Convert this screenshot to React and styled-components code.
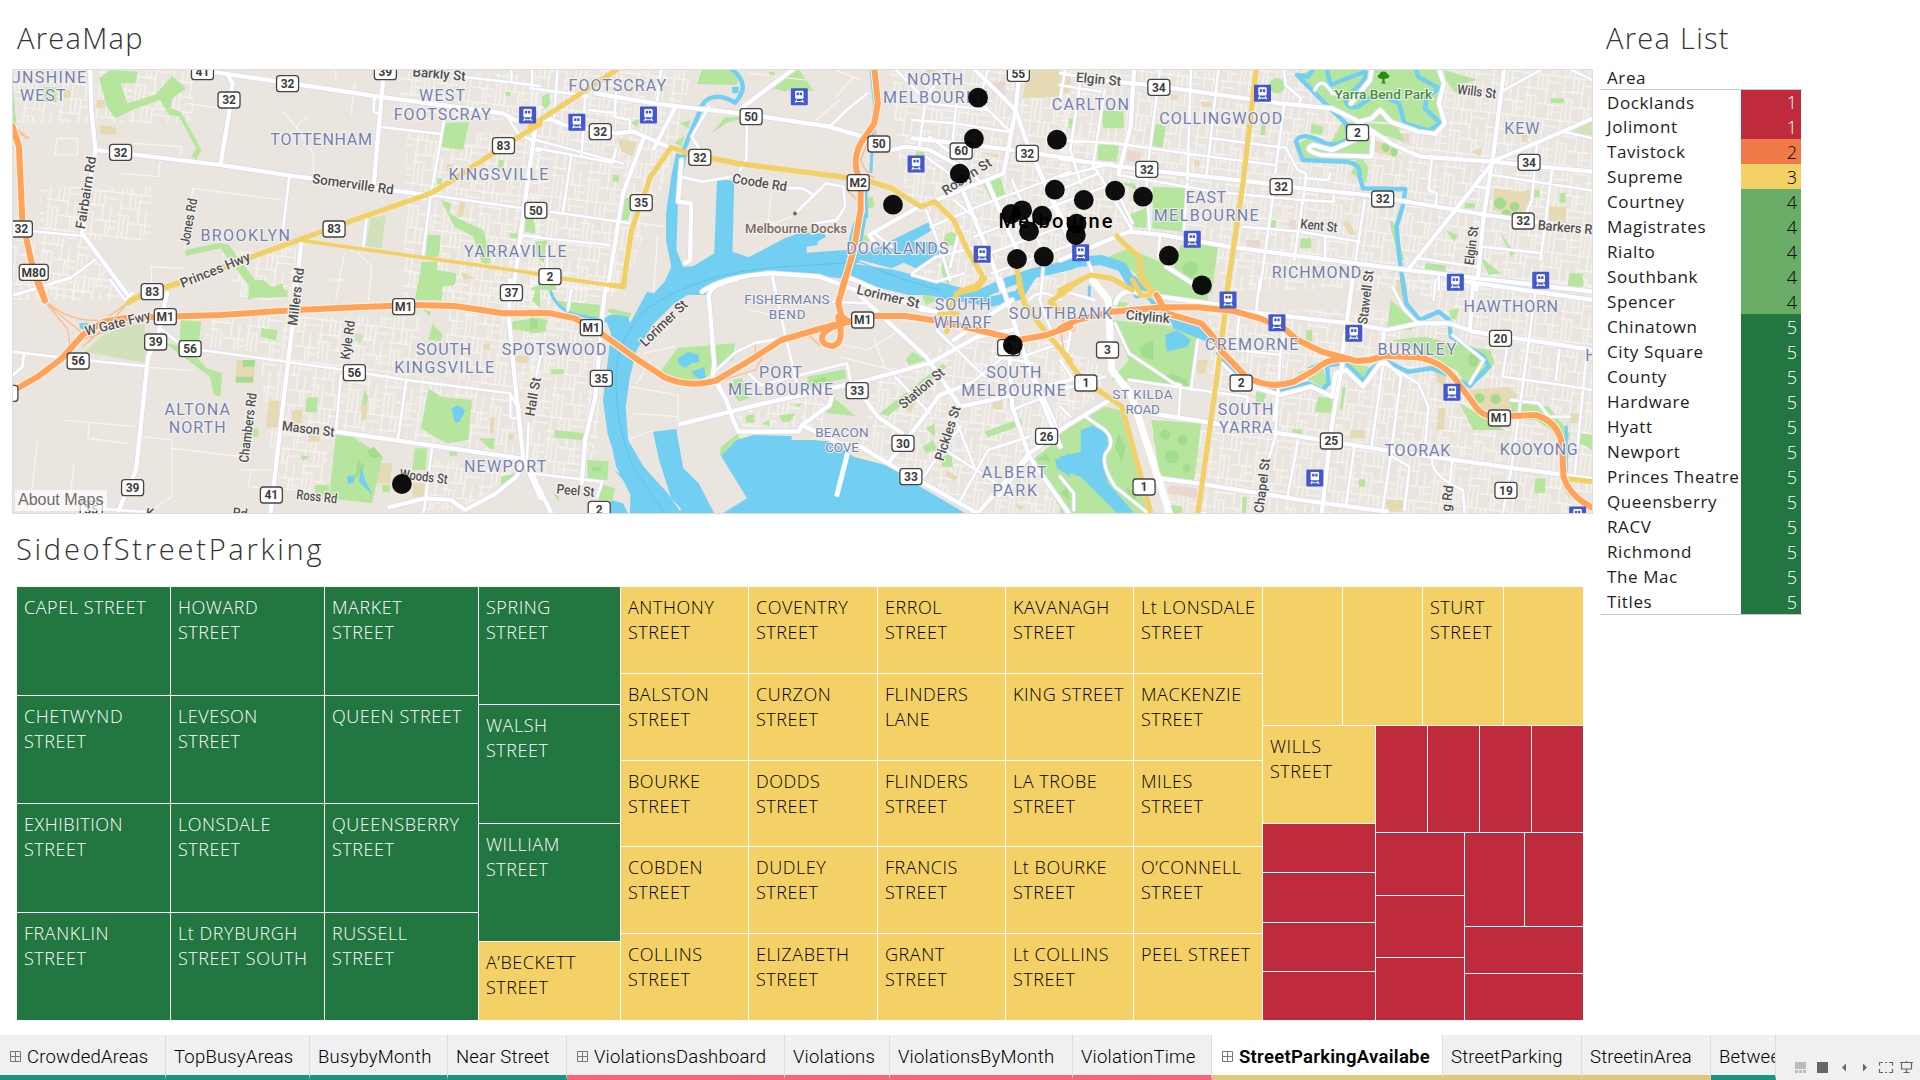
import React from "react";
import styled, { createGlobalStyle } from "styled-components";

const GREEN = "#22763f";
const LIME = "#69ad67";
const GOLD = "#f4d166";
const ORANGE = "#f17a4a";
const RED = "#bf2b3c";

const GlobalStyle = createGlobalStyle`
  * { box-sizing: border-box; }
  body { margin: 0; background: #fff; font-family: "Open Sans", "Noto Sans", sans-serif; }
`;

/* ------------------------------------------------------------------ */
/* Layout                                                              */
/* ------------------------------------------------------------------ */

const Page = styled.div`
  width: 1920px;
  height: 1080px;
  overflow: hidden;
  display: flex;
  flex-direction: column;
`;

const Dashboard = styled.main`
  height: 1035px;
  display: flex;
  padding-left: 12px;
`;

const LeftColumn = styled.section`
  width: 1581px;
  display: flex;
  flex-direction: column;
`;

const RightColumn = styled.section`
  width: 201px;
  margin-left: 8px;
  display: flex;
  flex-direction: column;
`;

const Title = styled.h1`
  margin: 0;
  height: ${(p) => p.$h}px;
  padding: ${(p) => p.$top}px 0 0 ${(p) => p.$left || 5}px;
  font-size: 29px;
  line-height: 40px;
  font-weight: 300;
  letter-spacing: ${(p) => p.$ls || 0}px;
  color: #333;
  white-space: nowrap;
`;

/* ------------------------------------------------------------------ */
/* Map                                                                 */
/* ------------------------------------------------------------------ */

const MapFrame = styled.div`
  position: relative;
  height: 445px;
  overflow: hidden;
  border: 1px solid #dedede;
`;

const MapSvg = styled.svg`
  display: block;
  margin: -1px;
  width: 1581px;
  height: 445px;
`;

const AboutMaps = styled.div`
  position: absolute;
  left: 2px;
  bottom: 2px;
  width: 92px;
  height: 21px;
  padding-left: 3px;
  background: rgba(255, 255, 255, 0.72);
  color: #6c6c6c;
  font: 16px/20px "Liberation Sans", Arial, sans-serif;
  white-space: nowrap;
`;

const SX = 540 / 1568;
const SY = 1 / 3;

/* The base map is stored as six tiles; every tile has its own local grid. */
const TILES = [
  {
    ox: 0, oy: 0,
    blocks: "M38 210H560V370H38Z M1160 220H1568V360H1160Z M1180 400H1568V900H1170Z M640 760L860 740V900H700Z M38 720H260L400 900H38Z M115 560H440V720H115Z",
    parks: "M288 235L320 210L400 215L395 250L350 250L370 310L450 285L500 228L540 265L500 295L495 325L525 335L585 450L570 478L555 470L570 445L520 350L490 345L465 300L395 325L335 355L310 320Z M38 260L48 375H38Z M127 262h37v45h-37z M538 750L640 728L665 735L770 880L720 900L725 860L640 745L540 768Z M780 865L820 850L825 875Z M1290 370L1362 365L1345 450L1283 440Z M1280 600L1310 610L1305 640L1350 665L1405 690L1425 790H1400L1375 710L1320 680Z M1240 705h40l-5 65h-38z M1225 785h45v25l55 10l-5 30h-35l-5 50h-75z M1525 655h25v40h-25z M1480 700h25v15h-25z M1468 275h14v14h-14z M1448 480h14v25h-14z M1268 535h15v18h-15z",
    sand: "M292 375L335 380L340 405L290 402Z M280 300h25v25h-25z M185 270h20v25h-20z M1340 815L1380 838H1345Z M1335 605h18l-8 45h-18z M1298 492h18v24h-18z",
    olive: "M1075 655L1120 645L1108 745L1062 738Z",
    thin: "M165 415H225V465H160Z M355 520L460 530L465 480 M390 430L528 440L520 480 M560 565L820 600 M560 565L545 680 M820 335L860 380L890 350 M860 380L910 460L910 520 M545 310L640 325 M975 210V235 M1030 250L1020 340 M435 800L530 805 M440 800V870 M1000 760L975 900 M1040 760L1080 800L1070 900",
    streets: "M38 688L238 708 M840 530L820 705 M1087 290L1085 335L1102 340 M1100 380L1280 402 M1290 360L1250 590L1228 765 M1250 585L1520 625 M1470 345L1505 400L1550 425 M1345 230L1568 258 M1485 210V245 M1545 210V258 M275 780L210 830L45 885 M1065 650L1055 740 M1510 705L1568 710 M1555 450L1568 452",
    roads: "M262 210L265 330L277 450L262 540L238 700L375 890 M277 450L640 495L850 528L905 535L1145 572L1260 588 M540 205L660 222L1100 290L1460 340L1500 362 M660 222L675 250L665 340L640 495 M1115 210L1100 380L1085 560 M1555 380L1530 560L1500 800L1485 900 M875 730L855 905",
    yellow: "M1568 372L1460 440L1300 550L1250 580L1000 670L880 715L720 775L540 840L380 900",
    yellowThin: "M880 722L1568 822",
    orange: "M36 378L55 440L65 660L90 780L130 900",
    ramps: "M45 395L85 415 M50 390Q70 400 75 415",
    areas: [["UNSHINE", 30, 248, 220], ["WEST", 58, 303, 132], ["TOTTENHAM", 785, 436, 295], ["WEST", 1217, 304, 133], ["FOOTSCRAY", 1143, 359, 282], ["BROOKLYN", 582, 723, 260], ["KINGSVILLE", 1302, 541, 290], ["YARRAVILLE", 1347, 772, 298]],
    names: [["Barkly St", 1275, 222, 53, 5], ["Somerville Rd", 1025, 553, 82, 8], ["Fairbairn Rd", 250, 578, 73, -81], ["Jones Rd", 548, 665, 47, -80], ["Princes Hwy", 625, 810, 74, -22]],
    shields: [["32", 835, 251], ["41", 588, 215], ["39", 1119, 215], ["32", 665, 300], ["32", 350, 457], ["83", 1462, 437], ["83", 970, 687], ["32", 62, 687], ["M80", 98, 817], ["83", 442, 875], ["37", 1485, 878]],
    trains: [[1532, 345]],
    dots: [],
  },
  {
    ox: 530, oy: 60,
    blocks: "M0 27H470L420 280L270 690H0Z M1050 27H1568V690H1300L1100 440L1060 240Z M1110 640L1300 570V690Z",
    parks: "M500 27H580L605 60L600 75L485 72Z M705 85L780 27L825 95L765 85L740 95Z M528 220L565 172L630 170L570 190Z M268 420L305 405L285 482L257 480Z M1315 370L1365 348L1382 410L1340 422Z M1242 537a20 20 0 1 1 -40 0a20 20 0 1 1 40 0Z M35 110L55 98L60 130L45 148L35 135Z M1195 610h22v75l-20 -40z M420 250L450 225L440 260Z M980 415l15 -5l5 30l-20 5z M1120 270h25v25h-25z M10 680L75 675V690H0Z M435 190L465 180L460 205Z M290 185L320 178L310 200Z M695 35h15v15h-15z M960 530L990 520L985 545L960 550Z M240 345h18v20h-18z M15 545L50 540L40 610L20 590Z M0 480L15 490V520H0Z",
    sand: "M255 235L310 245L300 288L265 275Z M1445 27H1540L1538 110L1430 115Z M1310 275L1365 285L1355 295Z M1150 27h25v12h-25z",
    pink: "M1345 65h35v40h-35z",
    water: "M425 275L455 285L430 420L425 570L445 620L475 618L535 580L543 358L593 362L588 575L635 592L740 535L800 512L820 525L850 515L860 530L835 545V555L803 560V578L920 570L935 500L960 440L978 470L960 570L985 575L1100 515L1160 485L1168 510L1110 545L1180 545L1190 580L1120 625L1085 608L1050 625L960 600L945 612L1060 630L1330 705H1100L900 655L780 640L640 650L560 672L510 705H375L410 620L395 540V460L410 350Z M587 80h20l-2 20h-18z",
    river: "M585 27Q645 75 595 128Q560 105 530 112Q500 120 495 150L470 210L438 290",
    riverThin: "M990 27L1000 130L990 335 M975 370L978 470",
    riverWide: "M1280 715L1390 665L1460 640L1568 615",
    thin: "M640 40L800 60 M830 180L900 120 M700 400L690 500L760 470 M760 520L690 480 M890 110L940 50 M370 530L360 690 M250 480L390 500 M880 27L960 60",
    streets: "M0 85L170 108 M630 190L628 300L610 330 M980 100L920 150L875 195 M520 140L470 230L490 265 M440 350L500 365L585 350 M745 385L790 385L825 405L770 460 M825 405L860 370L910 380L915 440L890 480L830 490 M0 235L270 310 M20 265L240 308L250 265 M60 455L290 490 M120 290L95 460 M160 110L150 290 M70 170L80 30 M380 27L370 120 M250 100L245 170L290 180V210 M170 150L250 160 M0 530L230 555 M50 560V640 M1060 27L1130 100 M1210 27L1150 110L1130 260 M1240 110L1225 270 M1300 120L1395 215 M1160 230L1250 300L1310 370 M1150 290L1230 350 M1230 420L1300 480 M1165 500L1300 440L1480 370L1568 335 M1290 530L1568 420 M1310 590L1568 490 M1340 640L1568 555 M1400 360L1500 600 M1470 320L1568 550 M1110 640L1180 590L1300 560 M1110 645L1180 665L1260 640 M1490 620L1485 690 M705 650L710 690 M1110 180L1230 190L1390 215 M1110 125L1330 150 M1330 27L1310 100 M1150 450L1190 560L1220 660 M1250 500L1220 620 M1000 520L1050 560",
    roads: "M190 100L360 130L480 145L610 160L870 200L950 225L1050 270L1090 260L1160 270L1250 320 M0 205L30 180L60 178L100 195L250 220L300 215L400 260L440 275 M765 27L620 140 M420 145L360 265 M330 235L270 400L225 690 M440 300L430 425L468 430L465 600L450 610 M1110 235L1250 250L1400 270L1568 295 M1290 27L1410 150L1440 240L1500 380L1568 520 M1420 50L1410 150L1375 340L1130 440L985 525L1000 545 M1260 400L1340 600L1370 690 M1330 370L1430 610 M500 695Q560 650 700 640L840 650L960 695",
    yellow: "M0 200L255 27 M460 280L410 262L350 350L295 510L270 680 M460 280L600 310L900 350L990 365L1050 385L1135 440L1175 425L1230 480L1270 570L1310 640Q1325 675 1250 692 M1415 630L1425 695",
    yellowThin: "M270 682L0 640",
    ramps: "M1005 180L960 300Q975 340 1000 355 M920 390L960 430 M1000 190L1005 230",
    orange: "M1000 25L1010 130L1000 190L960 250Q940 290 948 330L960 370V450L940 570L905 695",
    areas: [["FOOTSCRAY", 112, 92, 283], ["NORTH", 1095, 75, 163], ["MELBOURNE", 1025, 129, 305], ["DOCKLANDS", 918, 582, 297]],
    names: [["Coode Rd", 667, 368, 55, 9], ["Roslyn St", 1268, 350, 56, -33]],
    shields: [["32", 204, 215], ["50", 642, 170], ["32", 493, 292], ["35", 323, 428], ["50", 17, 451], ["M2", 953, 368], ["50", 1013, 252], ["60", 1252, 273], ["55", 1418, 40], ["32", 1444, 280], ["2", 58, 650]],
    trains: [[136, 187], [344, 165], [782, 110], [1121, 312], [1313, 583]],
    dots: [[1301, 113], [1289, 236], [1248, 341], [1054, 434], [1524, 389], [1397, 462], [1429, 451], [1487, 467], [1449, 514], [1414, 597], [1492, 590], [1530, 239]],
  },
  {
    ox: 1060, oy: 60,
    blocks: "M0 27H1547V690H480L440 540L0 500Z",
    parks: "M690 45L740 27H1105L1115 70L1095 130L1112 190L1095 220L1040 215L985 190L870 180L790 140Z M1115 30L1215 60L1175 70L1150 100L1120 60Z M820 185L980 195L1000 245L910 215V290L880 300L895 320L890 370L845 340L860 300L700 300L690 250L720 235L780 260Z M730 190L765 200L760 225L728 220Z M120 150L185 155V205H125Z M112 250L172 255L165 305L108 300Z M280 190L307 200L298 262L262 258Z M653 77a23 23 0 1 1 -46 0a23 23 0 1 1 46 0Z M270 380L370 385L360 515L268 505Z M180 370H215L230 395Z M200 465L258 440L250 505L215 500Z M350 555L460 550L440 700H400L330 620Z M140 590L200 565L300 610L380 670V700H240L220 640Z M700 535h30v30h-35z M1060 610L1120 615V640L1058 632Z M1220 590L1280 640L1245 645Z M1480 640h38v40h-42z M1275 510L1320 580L1310 590Z M1425 115h38v15h-38z M585 190h12v35h-15z M1175 430h30v15h-30z M612 480h15v25h-15z M955 480L970 490L1000 600H985Z M1120 510L1155 525L1145 545Z M1375 390h18v22h-18z M1450 400h18v28h-18z M25 175h18v30h-18z",
    sand: "M1260 385L1340 395L1380 385L1340 470L1258 450Z M1420 440h50v60h-50z M910 240L985 262L975 292L915 275Z M410 125h30v15h-30z M1195 275L1225 262L1220 290Z M820 485h20l20 40h-20z M1375 640h40v50h-40z M390 300h15v20h-15z M320 105h22v14h-22z M1340 225h18v20h-18z M0 40H30V100H0Z",
    pink: "M190 270L235 275L232 310L195 305Z M540 540h42v22h-42z M990 220h25v30h-25z M665 480h20v30h-20z",
    olive: "M1475 222L1546 180V225Z",
    dark: "M1296 430a18 18 0 1 1 -36 0a18 18 0 1 1 36 0Z M1334 440a14 14 0 1 1 -28 0a14 14 0 1 1 28 0Z M1310 462a14 14 0 1 1 -28 0a14 14 0 1 1 28 0Z M400 626a22 22 0 1 1 -44 0a22 22 0 1 1 44 0Z M958 262a12 14 0 1 1 -24 0a12 14 0 1 1 24 0Z M980 275a10 14 0 1 1 -20 0a10 14 0 1 1 20 0Z",
    river: "M735 27L720 50L688 45L770 130L830 190L840 235Q800 260 770 250Q700 210 685 245L705 300L830 305Q875 310 870 350L880 385L1003 388L995 440L977 500L985 590L1000 700 M775 27L785 75L885 35 M885 30Q900 60 828 110Q830 150 865 140L920 100L985 130L1000 190L1070 212L1105 190L1060 145L1065 110L1100 85L1040 50L1033 27",
    riverWide: "M0 620L60 605L120 600L180 620L225 700",
    streets: "M0 75L120 95 M0 40L130 60 M15 27L0 120 M60 60L30 270L60 370 M130 90L95 320 M290 30L255 320 M380 27L370 360 M460 27L425 350 M650 27L655 75L700 115L695 130 M650 140L625 340 M440 235L640 262L655 262L690 330L715 340L705 430 M710 355L780 360L785 340 M0 240L160 250L400 285L620 315 M0 350L150 310 M0 430L170 365 M0 390L110 340 M100 320L210 510 M210 490L160 380 M250 340L260 510 M370 370L360 510 M170 345L450 395L700 420L795 425V405 M620 400L580 690 M705 420L680 600 M885 420L855 620 M530 500L700 515L870 545 M770 530V600 M1290 90L1400 27 M1080 290L1070 390L1095 400L1090 440 M1255 345L1546 392 M1430 320L1395 600 M1385 250L1370 420L1355 460 M1460 215L1546 235 M1480 27L1546 60 M1230 560L1400 580 M1040 595L1210 620 M1210 380L1240 385 M290 530L285 590 M80 600L95 640 M1100 650V690 M740 90Q760 45 790 100L830 110",
    roads: "M215 27L205 200L170 340 M130 62L260 75L640 130L790 145L850 175L960 250L1045 290L1255 305L1546 335 M0 295L250 330L600 370L700 385L890 405L1240 465L1546 508 M0 600L200 515L300 525L490 560L860 610L1010 630L1546 695 M1010 630L1255 310L1290 27 M1255 305L1460 215L1546 175 M1255 305L1230 470L1210 690 M905 27L900 60L845 130 M870 185L905 175L930 150L960 185L1040 215L1090 222L1118 190L1100 130L1115 70L1100 27 M905 290L760 285Q700 270 735 255L790 270L910 215L905 290 M310 620L400 680",
    yellow: "M570 27L530 380L485 695 M165 528L190 555L230 590L235 650L265 690 M0 690L90 645L150 655L210 690",
    areas: [["CARLTON", -24, 150, 224], ["COLLINGWOOD", 288, 192, 357], ["KEW", 1290, 223, 102], ["EAST", 365, 428, 117], ["MELBOURNE", 272, 482, 305], ["RICHMOND", 615, 654, 260]],
    names: [["Elgin St", 112, 58, 45, 5], ["Wills St", 1210, 95, 39, 7], ["Kent St", 752, 497, 37, 6], ["Barkers Rd", 1477, 503, 62, 5], ["Elgin St", 1195, 557, 39, -83]],
    shields: [["34", 287, 82], ["32", 252, 328], ["32", 642, 380], ["2", 864, 218], ["32", 937, 417], ["34", 1362, 307], ["32", 1345, 483]],
    trains: [[588, 100], [60, 578], [384, 538], [1148, 667], [1396, 661]],
    dots: [[69, 420], [160, 392], [241, 410], [48, 491], [46, 525], [316, 587], [412, 676]],
  },
  {
    ox: 0, oy: 280,
    blocks: "M600 110H1220V270L600 200Z M750 210L1480 330L1510 530L960 450L940 640L800 630Z M1250 540L1510 560L1350 690H1240Z M1300 20H1568V330H1500L1290 290Z M38 0H320L200 70Z",
    parks: "M525 120L585 125L575 205L520 200Z M480 190L545 200L600 265L645 280L640 348L620 345L610 290Z M760 145L805 150L802 182L757 170Z M890 352h33l-3 45h-33z M1245 325L1280 350L1370 360L1360 480L1300 490L1260 470L1222 445Z M975 465L1020 468L1112 530L1080 670L955 655Z M915 615h40v30h-40z M1205 505h35l-5 65h-38z M1225 85l25 10l-2 15z M1255 130L1285 165L1280 182L1245 180Z M1058 330L1070 350L1065 375H1050Z M870 525L900 530L880 542Z M1390 475L1436 475L1434 510L1415 500Z M735 445h15v25h-15z M1485 125L1568 112V160L1485 148Z M1545 60L1568 -5V85Z M1220 -5H1325L1320 15L1285 20L1283 62L1212 55Z M722 0H765L800 30H835V50L722 55Z M1455 590L1495 580L1480 620L1455 625Z M1110 615h22v22h-22z M1305 515h22v12h-22z",
    sand: "M688 240H742L737 310H684Z M780 362h32l-5 80h-35z M850 390h30l-5 40h-30z M1050 375h18l-5 45h-15z M1102 548L1140 550L1132 612L1095 610Z M1200 610h32v40h-35z M1425 410h12l-4 48h-12z M895 460h33v25h-33z M1495 228h38v20h-38z M1403 192h20v16h-20z M1475 462h16v16h-16z",
    olive: "M420 130L425 250L245 215L300 165L370 135Z M1030 160L1055 165L1050 188L1030 182Z",
    dark: "M705 240h35v20h-35z M685 290h50v17h-50z M1065 515L1085 500L1110 530L1080 535Z M1030 600L1040 540L1060 560Z",
    water: "M1312 385L1330 375L1350 390L1345 405L1330 430L1320 425L1315 405Z M1050 558L1060 600L1082 645L1042 605Z M1008 588L1030 585L1028 608L1010 612Z M230 130L258 128L250 150L232 145Z",
    thin: "M185 420L390 440 M260 430L255 475L370 490 M415 470L500 480V650L440 690 M500 505L700 530 M110 480L85 690 M215 555L205 640 M435 262L560 272 M730 570L720 620L880 630 M960 0H1010 M700 570H790",
    streets: "M320 0L365 62 M38 45L205 -5 M38 215L240 240L420 258 M70 220L65 260L38 285 M470 150L540 205L600 212L1000 270L1180 300L1480 340L1510 390 M990 285L975 455 M1180 300L1155 480 M1255 500L1230 700 M1482 340V415H1500 M300 687L440 697 M1535 430L1530 540 M365 60L385 38",
    roads: "M485 40L460 160L430 230L395 570L345 690 M855 0L850 130L830 300L785 705 M975 455L1510 535 M1480 0L1478 120L1500 350L1520 540L1570 655 M1520 540L1500 590L1440 640L1350 690L1310 660L1235 655L1130 682",
    yellow: "M372 68L410 45L525 8",
    ramps: "M130 65Q180 110 240 160 M130 60Q200 130 300 120L370 70 M200 215Q205 150 190 140L135 70 M240 200Q330 120 365 75 M220 185Q330 150 400 115",
    orange: "M50 325L110 290L180 235L240 165L300 125L370 113L480 110L640 105L860 90L1000 83L1200 75L1320 78L1460 100H1568 M105 -5L130 62",
    areas: [["SOUTH", 1208, 225, 160], ["KINGSVILLE", 1145, 279, 290], ["SPOTSWOOD", 1457, 225, 304], ["ALTONA", 478, 405, 190], ["NORTH", 490, 459, 165], ["NEWPORT", 1347, 577, 239]],
    names: [["W Gate Fwy", 342, 130, 67, -14], ["Millers Rd", 860, 50, 58, -83], ["Chambers Rd", 720, 443, 70, -83], ["Kyle Rd", 1010, 180, 39, -82], ["Mason St", 895, 447, 53, 7], ["Ross Rd", 920, 650, 41, 6], ["Woods St", 1230, 590, 48, 7], ["Hall St", 1548, 350, 39, -80], ["K", 435, 700, 8, 8], ["Rd", 697, 700, 15, 8]],
    shields: [["M1", 480, 110], ["39", 452, 186], ["56", 552, 206], ["56", 227, 243], ["56", 1029, 278], ["M1", 1172, 80], ["39", 385, 623], ["41", 788, 645], ["", 20, 340], ["35", 265, 688]],
    trains: [],
    dots: [[1167, 612]],
  },
  {
    ox: 530, oy: 280,
    blocks: "M0 0H270L220 80L190 600H0Z M1000 290L1250 170H1568V700H1300L960 490Z M590 400L860 340L850 440L620 440Z",
    parks: "M65 60L205 75L200 120L120 100Z M230 85L295 100L265 175L252 170L280 115L225 95Z M0 110L50 120L45 155L0 160Z M430 203L595 190L590 240L560 255L500 300L450 305L372 282Z M72 450L162 460L160 482L70 472Z M165 540L228 543L225 600L168 600Z M200 610L247 625L240 660H200Z M555 500L605 460L612 475L570 520L550 530Z M805 290L915 268L918 295L810 320Z M590 300L615 295L635 355L605 365L590 340Z M880 350L945 408L860 400Z M1015 400L1200 250L1210 262L1040 408Z M1090 240L1110 215L1150 240L1100 255Z M1320 455L1425 415L1430 435L1330 472Z M1140 500L1170 480L1185 510L1150 518Z M1150 445L1175 430V470Z M1195 530L1225 520L1228 560L1195 560Z M725 405L770 400L755 425H730Z M625 408L650 402L652 428H630Z M675 430l20 -12v22z M60 268h38v15h-38z M1460 540L1530 480L1568 450V700H1548Z M1130 25L1185 60L1150 75Z M765 375L790 370L780 382Z M68 640L85 650L82 665Z M1390 350h15v20h-15z",
    dark: "M0 115L25 122L20 145L0 150Z M180 560h25v14h-25z M1470 540L1500 520L1510 545Z M820 300L860 290V302L822 312Z M1540 640L1560 620L1568 660Z",
    sand: "M1340 355L1372 360L1370 388H1345Z M1210 570L1240 590L1235 605L1205 585Z M1090 385L1120 365L1105 400Z M1410 670L1435 680L1420 695Z",
    beach: "M610 470L670 460L757 466V482L815 482L820 474L880 483 M945 525L1020 550L1100 610L1235 695",
    water: "M340 35L360 40L400 -5H540L480 30L420 70L360 130L310 210L290 290L278 380L285 480L330 560L400 640L440 700H290L292 640L250 560L240 510L225 460L212 360L225 250L235 160L218 115Q230 100 255 105L285 110L290 130Z M357 455L425 447L430 480L445 565L490 610L535 700H435L438 685L410 655L375 540Z M555 528L600 480L650 465L760 468V480H820L880 485L940 530L1050 560L1100 600L1265 700H560L630 655Z M235 660L270 670L285 700H230Z M245 570L285 600L292 645L270 600Z M430 235L460 215L490 225L492 245L470 250L450 265L430 250Z M468 275L505 262L510 290L495 298L480 290Z M1568 520L1525 540L1530 565L1568 590Z",
    riverThin: "M60 35Q80 95 150 108L220 122",
    riverWide: "M960 -20L1080 5L1200 42L1340 65L1420 45L1460 -20",
    thin: "M290 320L430 345V430 M300 400L430 410 M310 310L350 240 M850 180L980 210L1060 160 M280 480L360 450 M640 90L720 110 M980 60L1100 20 M900 230L1050 270 M330 220L420 200 M1000 180L1030 260 M300 230L380 290",
    streets: "M0 580L210 605L195 650 M530 280L600 215L650 190L750 170 M545 300L575 380 M635 280L670 315L920 250L930 300 M705 -5L740 160L775 310 M880 65L970 70 M1180 150L1320 290 M1060 290L1160 400 M1080 60L1200 100 M1190 500L1340 600L1400 650 M1130 610L1190 520L1250 440 M1250 660L1330 510L1450 470 M1400 390L1568 320 M1440 230L1530 440 M1280 310L1400 210 M1430 230L1568 180 M1490 -5L1480 60L1530 200 M1540 60Q1480 20 1450 60 M1350 230L1460 250 M1240 430L1290 560 M120 30L110 90 M30 230L10 330 M60 700L10 590 M1360 650L1450 530 M1530 480L1500 400",
    roads: "M220 20L210 100L190 350L160 480L150 610 M600 -2Q510 15 520 60L535 250L530 290L570 360L590 420L605 455H780L790 435L870 375L878 345 M435 433L680 370L960 305L1160 250L1300 170L1400 150 M960 340L1010 410L1080 460 M790 435L840 460L900 490L960 500L1040 550L1300 700 M960 50L1150 230L1250 380L1340 360L1568 300 M1040 550L1100 470L1190 345L1280 310 M1365 -5L1400 110L1450 270L1540 500 M1390 180L1400 380L1450 530L1568 705 M1300 700L1450 520L1568 430 M930 -5L1140 90L1230 100 M0 570L65 705 M1230 180L1400 60",
    pier: "M922 520L890 650",
    yellow: "M1320 -5L1300 25L1240 40L1225 75L1210 155 M1190 102H1240 M1420 -5L1435 70L1500 160L1568 240 M1568 25L1510 65L1540 95 M230 15L272 20L275 -5",
    yellowThin: "M80 -5L270 20",
    ramps: "M690 200L655 270L560 300 M810 165Q830 190 850 200 M655 200L650 240",
    orange: "M0 98L60 100L130 115L200 155L300 230L390 292Q460 325 540 302L640 240L730 180L830 150L900 130L1000 108H1090L1200 125L1300 150L1420 180L1500 165L1568 140 M915 -5L895 70L905 110L925 125 M895 110Q915 190 880 198Q840 195 850 165Q865 140 930 125",
    areas: [["FISHERMANS", 622, 72, 248, 1], ["BEND", 693, 118, 107, 1], ["PORT", 665, 293, 125], ["MELBOURNE", 575, 346, 305], ["SOUTH", 1175, 91, 163], ["WHARF", 1172, 145, 168], ["SOUTHBANK", 1390, 118, 300], ["SOUTH", 1325, 294, 160], ["MELBOURNE", 1252, 349, 304], ["BEACON", 828, 470, 155, 1], ["COVE", 857, 515, 98, 1], ["ALBERT", 1312, 593, 188], ["PARK", 1343, 647, 129]],
    names: [["Lorimer St", 388, 130, 60, -44], ["Lorimer St", 1040, 50, 64, 13], ["Station St", 1137, 325, 55, -40], ["Pickles St", 1213, 460, 57, -72], ["Peel St", 132, 632, 38, 5]],
    shields: [["M1", 178, 143], ["35", 207, 295], ["M1", 966, 120], ["33", 950, 332], ["30", 1083, 490], ["33", 1106, 590], ["26", 1500, 469], ["2", 201, 688], ["0", 1390, 203]],
    trains: [],
    dots: [[1402, 195]],
  },
  {
    ox: 1060, oy: 280,
    blocks: "M430 90H1547V700H300L260 400L440 430Z M0 200L130 260L110 350L0 430Z M1000 0H1547V200H1200Z",
    parks: "M0 450L130 380L175 390L255 700H0Z M265 420L410 430L390 600L290 590Z M150 120L430 150L400 180L380 330L150 300L200 240Z M230 0H380L430 30V75L290 60Z M960 60L1040 130L1020 150L950 150Z M965 180L1060 170L1180 200L1250 210L1262 250L1230 290L1180 310L1150 270L1060 230Z M750 350L790 355V400L740 395Z M690 280L760 250L775 310L760 320Z M830 250L895 260L885 300Z M1310 365L1420 380L1480 460V480L1440 460L1380 420H1310Z M1510 460L1546 465V510L1510 490Z M1380 595H1410L1408 640H1378Z M320 675L355 680V700H320Z M570 335L600 340L590 370L568 365Z M620 425h15v15h-15z M530 650h12l-2 48h-12z M1160 370L1230 410L1290 450H1200Z M1450 500L1482 660L1460 620Z M1475 0h45v18h-45z M140 60L200 70L180 90Z M1130 90L1160 85L1150 120L1135 115Z M675 448h28v15h-28z M715 150h18v35h-18z M868 598h18v22h-18z M820 320L830 322L820 390H812Z",
    dark: "M1233 355a15 15 0 1 1 -30 0a15 15 0 1 1 30 0Z M1280 357a15 15 0 1 1 -30 0a15 15 0 1 1 30 0Z M320 465a15 15 0 1 1 -30 0a15 15 0 1 1 30 0Z M370 480a15 15 0 1 1 -30 0a15 15 0 1 1 30 0Z M345 530a20 20 0 1 1 -40 0a20 20 0 1 1 40 0Z M380 565a12 12 0 1 1 -24 0a12 12 0 1 1 24 0Z M230 200L270 180V240L240 230Z M170 460L190 500L180 550L160 500Z M190 620L220 640V670L200 650Z M320 280L370 300V325L300 300Z M1215 240a15 22 0 1 1 -30 0a15 22 0 1 1 30 0Z",
    sand: "M1180 330L1300 320L1330 345L1300 400H1240Z M1120 200L1180 195L1190 240L1150 245Z M1100 385h20l-5 65h-22z M400 240H430L420 280L397 278Z M845 450h40v25h-45z M945 660h50v35h-45z M1480 400h30v30h-30z M1090 275L1120 285V320L1095 305Z M975 0h20l5 70l-22 -30z",
    pink: "M320 615L400 625L395 655L310 640Z M270 440L290 520L270 480Z",
    water: "M305 165L340 150L380 180L370 200L310 215Z M315 112L400 132L440 155L462 200L330 145Z M60 450L95 437L135 460L140 500L125 560L140 610L215 698H165L60 590L0 570V530L60 515Z M715 265L750 247V262Z",
    river: "M215 -5L250 40L275 75L330 125 M460 220L520 300L560 320L640 335L720 310L762 330L780 310L775 255L830 250L870 290L885 305L900 270L940 240L1010 275L1080 265L1130 285L1190 318L1245 260L1230 230L1135 170L1130 120L1100 95L1045 120L1005 70L995 -5",
    riverThin: "M85 20V50 M1470 440V580",
    streets: "M0 30L100 60 M160 130L200 220L330 310L350 315L345 405 M75 410L130 450Q160 480 140 510Q110 540 160 620L250 695 M0 590L40 640V690 M200 300L540 350 M580 0L570 90 M650 160L640 220L625 470L600 560 M520 110L510 210L640 225 M470 250L540 320 M940 240L905 500 M940 240L990 290L960 530L935 700 M940 250L1040 310L1070 380L1060 500 M965 530L1015 560L1000 690 M1080 540Q1080 590 1170 630L1175 700 M1140 540L1130 620 M690 480L685 520L660 650 M855 500L830 680 M545 350L540 390 M630 350L620 420 M965 20L1000 90L1040 130 M1300 190L1285 290L1490 320L1546 330 M1380 40L1310 570L1285 700 M1450 210L1440 300 M1530 210L1495 580 M1310 360L1390 370L1420 410H1480 M400 180L380 330 M0 380L30 410 M0 330L130 290 M40 100L20 220 M0 240L60 330 M1090 0L1085 60 M410 700L600 715 M1140 165L1230 240L1190 310",
    roads: "M95 0L140 60L150 270L205 340L320 705 M160 70Q180 20 230 40L290 50L500 80 M0 450L160 350 M265 400L450 430L700 470L940 510L1546 597 M290 595L430 615L700 660L950 695 M500 90L840 130L950 150L1040 130H1130L1200 155L1546 210 M850 -5L820 220 M820 250L790 430L760 700 M560 320L640 345L730 320L790 350L800 280L830 270L880 320L930 250L940 160 M1200 0L1190 150 M1180 5L1546 60",
    roadsWide: "M95 0L140 60L150 270L205 340L320 705",
    yellow: "M0 38L60 0 M210 0L235 45H280 M235 0L285 55 M490 -5L465 220L400 705 M0 205L50 280L110 330L180 380L235 590L265 705 M1465 595L1546 605",
    ramps: "M10 120Q0 170 10 200 M20 150Q50 160 40 140",
    orange: "M0 145L50 120L150 95L300 82H400L500 92L580 115L650 145L690 180L760 215L860 243L900 240L940 228L1040 232Q1110 245 1150 300L1200 370Q1220 405 1250 408H1310L1380 405Q1450 425 1458 500L1462 590Q1480 650 1550 685 M280 45L310 100L410 130L445 170L470 215L540 290Q610 330 680 305L740 270Q780 230 840 238",
    areas: [["CREMORNE", 421, 210, 271], ["BURNLEY", 922, 226, 228], ["HAWTHORN", 1172, 96, 274], ["ST KILDA", 152, 358, 175, 1], ["ROAD", 190, 403, 100, 1], ["SOUTH", 458, 405, 162], ["YARRA", 462, 459, 155], ["TOORAK", 942, 529, 191], ["KOOYONG", 1277, 524, 226], ["H", 1525, 243, 26]],
    names: [["Stawell St", 888, 52, 54, -83], ["Citylink", 255, 110, 44, 5], ["Chapel St", 587, 617, 55, -83], ["g Rd", 1125, 655, 26, -83]],
    shields: [["3", 138, 210], ["1", 75, 309], ["2", 526, 309], ["1", 244, 621], ["25", 788, 483], ["M1", 1276, 414], ["19", 1295, 631], ["20", 1279, 175]],
    trains: [[488, 60], [630, 128], [853, 160], [1138, 337], [740, 594], [1503, 705]],
    dots: [],
  },
];

const toX = (t, x) => t.ox + x * SX;
const toY = (t, y) => t.oy + y * SY;

const Lines = styled.path`
  fill: none;
  stroke: ${(p) => p.$c};
  stroke-width: ${(p) => p.$w}px;
  stroke-linejoin: round;
  stroke-linecap: ${(p) => p.$cap || "round"};
  vector-effect: non-scaling-stroke;
`;

const AreaName = styled.text`
  font-family: Roboto, "Open Sans", sans-serif;
  font-size: ${(p) => (p.$small ? 13.5 : 16)}px;
  font-weight: ${(p) => p.$weight || 400};
  fill: ${(p) => p.$fill || "#7481ae"};
  stroke: #f3f1ee;
  stroke-width: 2px;
  paint-order: stroke;
`;

const StreetName = styled.text`
  font-family: Roboto, "Open Sans", sans-serif;
  font-size: 13.5px;
  font-weight: 500;
  fill: #505050;
  stroke: #f3f1ee;
  stroke-width: 2.5px;
  paint-order: stroke;
  text-anchor: middle;
`;

const ShieldText = styled.text`
  font-family: Roboto, "Open Sans", sans-serif;
  font-size: 12px;
  font-weight: 700;
  fill: #3c3c3c;
  text-anchor: middle;
`;

const CityName = styled.text`
  font-family: Roboto, "Open Sans", sans-serif;
  font-size: 20px;
  font-weight: 500;
  fill: #000;
`;

const LAYERS = [
  ["thin", "#f8f6f3", 1.2],
  ["beach", "#f1ebc6", 3],
  ["river", "#73cff2", 4.5],
  ["riverThin", "#73cff2", 3],
  ["riverWide", "#73cff2", 10],
];

const ROADS = [
  ["streets", "#dfe0ee", 4.2],
  ["roads", "#dcdded", 6],
  ["streets", "#ffffff", 2.5],
  ["roads", "#ffffff", 4.2],
  ["roadsWide", "#ffffff", 7],
  ["pier", "#ffffff", 5],
  ["yellowThin", "#f3d065", 3.6],
  ["yellow", "#f3d065", 5.2],
  ["ramps", "#ffb680", 1.2],
  ["orange", "#fff3e6", 8],
  ["orange", "#ffa25a", 6],
];

const FILLS = [
  ["blocks", "url(#blocks)"],
  ["olive", "#d1e1bb"],
  ["sand", "#e6dab5"],
  ["pink", "#ecd6d2"],
  ["parks", "#b6e59e"],
  ["dark", "#a2dc8c"],
];

function TileGroup({ tile, children }) {
  return <g transform={`translate(${tile.ox} ${tile.oy}) scale(${SX} ${SY})`}>{children}</g>;
}

function Shield({ x, y, label }) {
  const w = label.length > 2 ? 29 : 22;
  return (
    <g>
      <rect x={x - w / 2} y={y - 8} width={w} height={16} rx={3} fill="#fff" stroke="#444" strokeWidth={1.3} />
      <ShieldText x={x} y={y + 4.2}>{label}</ShieldText>
    </g>
  );
}

function Train({ x, y }) {
  return (
    <g transform={`translate(${x - 8.5} ${y - 8.5})`}>
      <rect width={17} height={17} rx={1} fill="#4358cc" />
      <path d="M5.3 2.5h6.4a1 1 0 0 1 1 1v6.2a1 1 0 0 1-1 1H5.3a1 1 0 0 1-1-1V3.500a1 1 0 0 1 1-1z" fill="#fff" />
      <path d="M5.8 4.300h2.300v2.800H5.800z M8.900 4.300h2.300v2.800H8.900z" fill="#4358cc" />
      <path d="M5.800 11.500L4.300 14.500 M11.200 11.500L12.700 14.500 M5.200 13.300H11.800" stroke="#fff" strokeWidth={1.1} fill="none" />
    </g>
  );
}

function AreaMap() {
  return (
    <MapFrame>
      <MapSvg viewBox="12 69 1581 445">
        <defs>
          <pattern id="blocks" width="104" height="132" patternUnits="userSpaceOnUse" patternTransform="rotate(7)">
            <path
              d="M0 4H104 M0 48H62 M40 92H104 M8 0V132 M34 0V48 M34 70V132 M62 4V92 M84 48V132 M0 70H34 M62 24H104 M84 112H104 M20 70V132 M48 4V48 M74 92V132"
              stroke="#f8f6f2"
              strokeWidth="3.4"
              fill="none"
            />
          </pattern>
        </defs>
        <rect x="12" y="69" width="1581" height="445" fill="#eae6df" />
        {FILLS.map(([key, color]) =>
          TILES.map((t, i) => t[key] && (
            <TileGroup tile={t} key={key + i}><path d={t[key]} fill={color} /></TileGroup>
          ))
        )}
        {LAYERS.map(([key, color, w]) =>
          TILES.map((t, i) => t[key] && (
            <TileGroup tile={t} key={key + i}><Lines d={t[key]} $c={color} $w={w} /></TileGroup>
          ))
        )}
        {TILES.map((t, i) => t.water && (
          <TileGroup tile={t} key={i}><path d={t.water} fill="#73cff2" /></TileGroup>
        ))}
        <path d="M665 514 L632 465 Q614 420 616 370 Q618 340 645 310 Q700 272 780 267 L860 262 Q900 280 940 290" fill="none" stroke="#62bfe8" strokeWidth="1" />
        {ROADS.map(([key, color, w]) =>
          TILES.map((t, i) => t[key] && (
            <TileGroup tile={t} key={key + color + i}>
              <Lines d={t[key]} $c={color} $w={w} $cap={key === "pier" ? "butt" : "round"} />
            </TileGroup>
          ))
        )}
        {TILES.map((t) => t.areas.map(([s, x, y, w, small], i) => (
          <AreaName key={t.ox + s + i + y} $small={small} x={toX(t, x)} y={toY(t, y)} textLength={w * SX} lengthAdjust="spacing">{s}</AreaName>
        )))}
        {TILES.map((t) => t.names.map(([s, x, y, w, a], i) => (
          <StreetName
            key={s + i + y}
            transform={`translate(${toX(t, x)} ${toY(t, y)}) rotate(${a})`}
            y={4.5}
            textLength={w}
            lengthAdjust="spacingAndGlyphs"
          >{s}</StreetName>
        )))}
        <AreaName x={745} y={232.5} textLength={102} lengthAdjust="spacingAndGlyphs" $small $weight={500} $fill="#7b6a5d">Melbourne Docks</AreaName>
        <circle cx={795} cy={213.5} r={2} fill="#7b6a5d" />
        <AreaName x={1334.500} y={98.500} textLength={97.500} lengthAdjust="spacingAndGlyphs" $small $weight={500} $fill="#3f8f3c">Yarra Bend Park</AreaName>
        <path d="M1383.500 71.500c2.500 0 3.500 1.300 3.500 2.400 1.700.3 2.500 1.400 2.300 2.700-.2 1.400-1.600 2-2.800 1.700-.5.4-1.200.6-1.900.5v2.700l1.200 2h-4.600l1.200-2v-2.500c-.8.2-1.600 0-2.100-.6-1.300.2-2.400-.6-2.500-1.800-.1-1.200.7-2.200 2-2.400 0-1.500 1.400-2.700 3.700-2.700z" fill="#2b8a12" />
        <CityName x={998.5} y={228} textLength={114} lengthAdjust="spacing">Melbourne</CityName>
        {TILES.map((t) => t.shields.map(([s, x, y]) => (
          <Shield key={s + x + y} x={toX(t, x)} y={toY(t, y)} label={s} />
        )))}
        {TILES.map((t) => t.trains.map(([x, y]) => <Train key={x + "-" + y} x={toX(t, x)} y={toY(t, y)} />))}
        {TILES.map((t) => t.dots.map(([x, y]) => (
          <circle key={x + "." + y} cx={toX(t, x)} cy={toY(t, y)} r={9.900} fill="#000" fillOpacity={0.94} />
        )))}
      </MapSvg>
      <AboutMaps>About Maps</AboutMaps>
    </MapFrame>
  );
}

/* ------------------------------------------------------------------ */
/* Treemap                                                             */
/* ------------------------------------------------------------------ */

const Treemap = styled.div`
  display: flex;
  gap: 1px;
  width: 1566px;
  height: 433px;
  margin-left: 5px;
`;

const Stack = styled.div`
  display: flex;
  flex: none;
  flex-direction: ${(p) => (p.$row ? "row" : "column")};
  gap: 1px;
  width: ${(p) => (p.$w ? p.$w + "px" : "auto")};
  height: ${(p) => (p.$h ? p.$h + "px" : "auto")};
`;

const Cell = styled.div`
  flex: none;
  width: ${(p) => (p.$w ? p.$w + "px" : "auto")};
  height: ${(p) => (p.$h ? p.$h + "px" : "auto")};
  padding: 8px 0 0 7px;
  overflow: hidden;
  background: ${(p) => p.$bg};
  color: ${(p) => (p.$bg === GOLD ? "#000" : "#fff")};
  font-size: 18px;
  line-height: 25px;
  font-weight: 300;
  letter-spacing: 0.55px;
  white-space: pre;
`;

const COLUMNS = [
  { w: 153, h: [108, 107, 108, 107], names: ["CAPEL STREET", "CHETWYND\nSTREET", "EXHIBITION\nSTREET", "FRANKLIN\nSTREET"] },
  { w: 153, h: [108, 107, 108, 107], names: ["HOWARD\nSTREET", "LEVESON\nSTREET", "LONSDALE\nSTREET", "Lt DRYBURGH\nSTREET SOUTH"] },
  { w: 153, h: [108, 107, 108, 107], names: ["MARKET\nSTREET", "QUEEN STREET", "QUEENSBERRY\nSTREET", "RUSSELL\nSTREET"] },
  { w: 141, h: [117, 118, 117, 78], names: ["SPRING\nSTREET", "WALSH\nSTREET", "WILLIAM\nSTREET", "A’BECKETT\nSTREET"], gold: 3 },
  { w: 127, names: ["ANTHONY\nSTREET", "BALSTON\nSTREET", "BOURKE\nSTREET", "COBDEN\nSTREET", "COLLINS\nSTREET"] },
  { w: 128, names: ["COVENTRY\nSTREET", "CURZON\nSTREET", "DODDS\nSTREET", "DUDLEY\nSTREET", "ELIZABETH\nSTREET"] },
  { w: 127, names: ["ERROL\nSTREET", "FLINDERS\nLANE", "FLINDERS\nSTREET", "FRANCIS\nSTREET", "GRANT\nSTREET"] },
  { w: 127, names: ["KAVANAGH\nSTREET", "KING STREET", "LA TROBE\nSTREET", "Lt BOURKE\nSTREET", "Lt COLLINS\nSTREET"] },
  { w: 128, names: ["Lt LONSDALE\nSTREET", "MACKENZIE\nSTREET", "MILES\nSTREET", "O’CONNELL\nSTREET", "PEEL STREET"] },
];
const GOLD_ROWS = [86, 86, 85, 86, 86];

function SideOfStreetParking() {
  return (
    <Treemap>
      {COLUMNS.map((c) => (
        <Stack key={c.names[0]} $w={c.w}>
          {c.names.map((n, i) => (
            <Cell key={n} $h={(c.h || GOLD_ROWS)[i]} $bg={c.h && i !== c.gold ? GREEN : GOLD}>{n}</Cell>
          ))}
        </Stack>
      ))}
      <Stack $w={320}>
        <Stack $row $h={138}>
          <Cell $w={79} $bg={GOLD} />
          <Cell $w={79} $bg={GOLD} />
          <Cell $w={80} $bg={GOLD}>{"STURT\nSTREET"}</Cell>
          <Cell $w={79} $bg={GOLD} />
        </Stack>
        <Stack $row $h={294}>
          <Stack $w={112}>
            <Cell $h={97} $bg={GOLD}>{"WILLS\nSTREET"}</Cell>
            <Cell $h={48} $bg={RED} />
            <Cell $h={49} $bg={RED} />
            <Cell $h={48} $bg={RED} />
            <Cell $h={48} $bg={RED} />
          </Stack>
          <Stack $w={207}>
            <Stack $row $h={106}>
              {[51, 51, 51, 51].map((w, i) => <Cell key={i} $w={w} $bg={RED} />)}
            </Stack>
            <Stack $row $h={187}>
              <Stack $w={88}>
                {[62, 61, 62].map((h, i) => <Cell key={i} $h={h} $bg={RED} />)}
              </Stack>
              <Stack $w={118}>
                <Stack $row $h={93}>
                  <Cell $w={59} $bg={RED} />
                  <Cell $w={58} $bg={RED} />
                </Stack>
                <Cell $h={46} $bg={RED} />
                <Cell $h={46} $bg={RED} />
              </Stack>
            </Stack>
          </Stack>
        </Stack>
      </Stack>
    </Treemap>
  );
}

/* ------------------------------------------------------------------ */
/* Area list                                                           */
/* ------------------------------------------------------------------ */

const ListHeader = styled.div`
  height: 25px;
  padding-left: 6px;
  border-bottom: 1px solid #c6c6c6;
  font-size: 17px;
  line-height: 25px;
  font-weight: 500;
  letter-spacing: 0.6px;
  color: #222;
`;

const List = styled.div`
  height: 525px;
  border-bottom: 1px solid #c6c6c6;
`;

const ListRow = styled.div`
  display: flex;
  height: 25px;
  &:first-child { height: 24px; }
  &:first-child > * { line-height: 25px; }
`;

const ListName = styled.div`
  width: 140px;
  padding-left: 6px;
  font-size: 17px;
  line-height: 26px;
  font-weight: 500;
  letter-spacing: 0.6px;
  color: #222;
  white-space: nowrap;
`;

const ListValue = styled.div`
  width: 60px;
  padding-right: 4px;
  text-align: right;
  background: ${(p) => p.$bg};
  color: ${(p) => p.$fg};
  font-size: 18px;
  line-height: 26px;
  font-weight: 300;
`;

const VALUE_STYLE = { 1: [RED, "#fff"], 2: [ORANGE, "#000"], 3: [GOLD, "#000"], 4: [LIME, "#000"], 5: [GREEN, "#fff"] };
const AREAS = [
  ["Docklands", 1], ["Jolimont", 1], ["Tavistock", 2], ["Supreme", 3], ["Courtney", 4], ["Magistrates", 4],
  ["Rialto", 4], ["Southbank", 4], ["Spencer", 4], ["Chinatown", 5], ["City Square", 5], ["County", 5],
  ["Hardware", 5], ["Hyatt", 5], ["Newport", 5], ["Princes Theatre", 5], ["Queensberry", 5], ["RACV", 5],
  ["Richmond", 5], ["The Mac", 5], ["Titles", 5],
];

/* ------------------------------------------------------------------ */
/* Tab bar                                                             */
/* ------------------------------------------------------------------ */

const TabBar = styled.nav`
  display: flex;
  height: 45px;
  background: #f0f0f0;
`;

const Tab = styled.div`
  flex: none;
  display: flex;
  align-items: center;
  gap: 5px;
  width: ${(p) => p.$w}px;
  padding: 3px 0 0 ${(p) => (p.$sheet ? 10 : 8)}px;
  overflow: hidden;
  border-right: 1px solid #dcdcdc;
  border-bottom: 5px solid ${(p) => p.$c};
  background: ${(p) => (p.$active ? "#fff" : "#f0f0f0")};
  color: #000;
  font-family: Roboto, "Open Sans", sans-serif;
  font-size: 18.5px;
  font-weight: ${(p) => (p.$active ? 600 : 300)};
  letter-spacing: ${(p) => (p.$active ? 0.3 : 0.2)}px;
  white-space: nowrap;
`;

const Controls = styled.div`
  display: flex;
  flex: 1;
  align-items: flex-start;
  padding: 24px 0 0 18px;
`;

const TEAL = "#1a9480";
const PINK = "#f96374";
const SAND = "#dfc77b";
const TABS = [
  ["CrowdedAreas", 166, TEAL, true], ["TopBusyAreas", 144, TEAL], ["BusybyMonth", 138, TEAL], ["Near Street", 119, TEAL],
  ["ViolationsDashboard", 218, PINK, true], ["Violations", 105, PINK], ["ViolationsByMonth", 183, PINK], ["ViolationTime", 139, PINK],
  ["StreetParkingAvailabe", 231, SAND, true, true], ["StreetParking", 139, SAND], ["StreetinArea", 129, SAND], ["Between", 65, TEAL],
];

function DashboardIcon() {
  return (
    <svg width="12" height="12" viewBox="0 0 12 12" fill="none" stroke="#777">
      <path d="M.5.5h10v10H.5z M5.500 .5v10 M.5 5.500h10" />
    </svg>
  );
}

function ViewControls() {
  return (
    <Controls>
      <svg width="126" height="20" viewBox="1794 1059 126 20">
        <path d="M1795 1062h11v7h-11z M1795 1070h3v3h-3z M1799 1070h3v3h-3z M1803 1070h3v3h-3z" fill="#bcbcbc" />
        <path d="M1817 1062h11v11h-11z" fill="#666" />
        <path d="M1846 1063.500v8l-4-4z M1863 1063.500v8l4-4z" fill="#666" />
        <path d="M1883 1062.500h-3.500v3 M1889 1062.500h3.500v3 M1879.500 1069v3.500h3.500 M1892.500 1069v3.500h-3.500 M1885 1062.500h2 M1885 1072.500h2" stroke="#666" fill="none" strokeWidth="1.200" />
        <path d="M1900 1062.500h13 M1901.500 1062.500v6.500h10v-6.500 M1906.500 1061v1.500 M1906.500 1069v3.500 M1903.500 1072.500h6" stroke="#666" fill="none" strokeWidth="1.200" />
      </svg>
    </Controls>
  );
}

export default function App() {
  return (
    <Page>
      <GlobalStyle />
      <Dashboard>
        <LeftColumn>
          <Title $h={69} $top={18} $left={5} $ls={1.3}>AreaMap</Title>
          <AreaMap />
          <Title $h={73} $top={15} $left={4} $ls={2.750}>SideofStreetParking</Title>
          <SideOfStreetParking />
        </LeftColumn>
        <RightColumn>
          <Title $h={65} $top={18} $left={5} $ls={1.3}>Area List</Title>
          <ListHeader>Area</ListHeader>
          <List>
            {AREAS.map(([name, v]) => (
              <ListRow key={name}>
                <ListName>{name}</ListName>
                <ListValue $bg={VALUE_STYLE[v][0]} $fg={VALUE_STYLE[v][1]}>{v}</ListValue>
              </ListRow>
            ))}
          </List>
        </RightColumn>
      </Dashboard>
      <TabBar>
        {TABS.map(([name, w, c, sheet, active]) => (
          <Tab key={name} $w={w} $c={c} $sheet={sheet} $active={active}>
            {sheet && <DashboardIcon />}
            {name}
          </Tab>
        ))}
        <ViewControls />
      </TabBar>
    </Page>
  );
}
